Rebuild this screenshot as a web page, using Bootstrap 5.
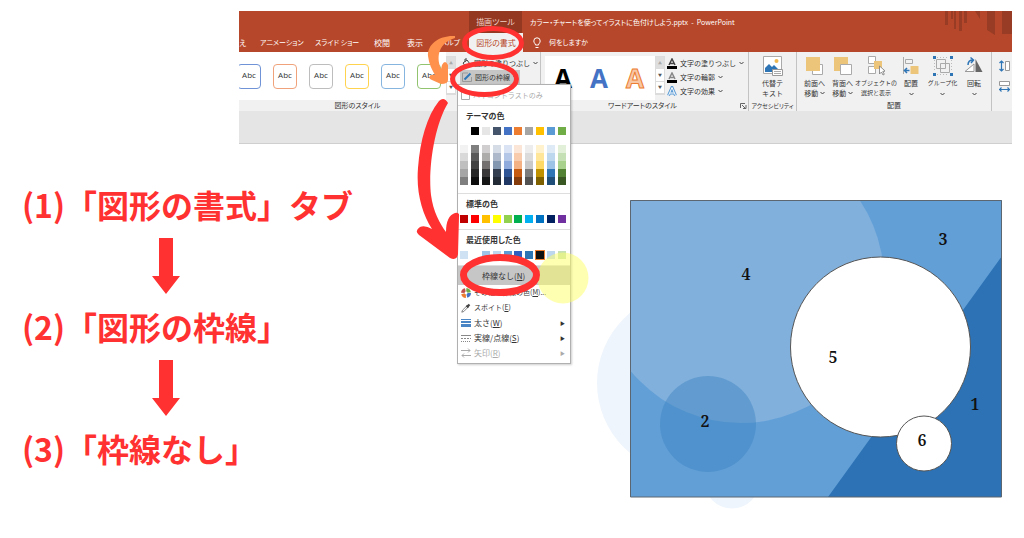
<!DOCTYPE html>
<html lang="ja">
<head>
<meta charset="utf-8">
<meta name="viewport" content="width=device-width, initial-scale=1">
<title>図形の枠線を消す手順</title>
<link href="https://cdn.jsdelivr.net/npm/bootstrap@5.3.0/dist/css/bootstrap.min.css" rel="stylesheet">
<style>
body{font-family:"Noto Sans CJK JP",sans-serif;font-feature-settings:"palt";font-size:8px;line-height:12px;color:#333;background:#fff}
svg{display:block;flex:none}
.ppt{margin:11px 12px 0 239px;font-size:8px}
.clip-x{overflow:hidden}
.titlebar{background:#b7472a;color:#fff;height:41px}
.titlebar a{color:#fff;text-decoration:none;white-space:nowrap;line-height:19px}
.kana{font-size:7px}
.tight{font-size:6px}
.title-row{height:22px}
.tab-row{height:19px;display:grid;grid-template-columns:21px 55px 59px 33px 33px 29px 54px 1fr}
.tool-tab{margin-left:230px;width:53px;background:#943822;color:#f0cfc6}
.tab-row .on{background:#f1f1f1;color:#b7472a}
.tell{padding-left:10px}
.circuit{top:0;right:0}
.ribbon{background:#f1f1f1;height:59px}
.grp{border-right:1px solid #c3c3c3}
.grp-main{height:48px}
.cap{height:11px;line-height:11px;text-align:center;white-space:nowrap;font-size:7px}
.cap.tight{font-size:6px}
.cap-shape{padding-right:64px}
.workspace{background:#e5e5e5;height:33px;border-bottom:1px solid #cfcfcf}
.gallery{background:#fff;flex:none}
.abc{width:24px;height:25px;border:1px solid;border-radius:4px;background:#fff;padding:0 0 4px;font:8px "Open Sans",sans-serif;color:#333}
.scroller{width:10px;height:39px;flex:none;border:1px solid #dcdcdc;background:#fff}
.scroller button{flex:1;border:0;border-bottom:1px solid #dcdcdc;background:#fff;padding:0;font-size:4px;line-height:8px;color:#555}
.scroller button:first-child{background:#dedede;color:#aaa}
.tool{border:0;background:none;padding:0 2px;height:14px;display:flex;align-items:center;gap:3px;white-space:nowrap;line-height:14px;color:#333}
.tool.pressed{background:#c6c6c6}
.big{border:0;background:none;padding:4px 0 0;display:flex;flex-direction:column;align-items:center;line-height:10px;white-space:nowrap;color:#333}
.big svg{margin-bottom:2px}
.chev{width:5px;height:4px;display:inline-block;vertical-align:middle;fill:none;stroke:#444}
.wa{border:0;background:none;padding:0;width:36px;font:bold 26px/36px "Open Sans",sans-serif}
.wa-line{color:#f7c6a5;-webkit-text-stroke:1px #ed7d31}
.outline-menu{display:block;top:73px;left:218px;width:114px;min-width:0;padding:0 0 3px;border:1px solid #b0b0b0;border-radius:0;box-shadow:1px 1px 2px #0003;font-size:8px;background:#fff;line-height:15px;color:#333}
.outline-menu h6{font-size:8px;line-height:12px;margin:0;padding:4px 0 5px 8px;font-weight:700}
.outline-menu section{border-bottom:1px solid #dedede}
.swatches{display:grid;grid-template-columns:repeat(10,1fr);padding:0 1px 6px 2px}
.swatches button{width:8px;height:8px;border:0;padding:0;background:var(--c)}
.mi{border:0;background:none;display:flex;align-items:center;gap:3px;padding:0 5px 0 3px;width:100%;height:15px;line-height:15px;color:#333;text-align:left}
.mi.hot{background:#c6c6c6;height:19px;padding-left:24px}
.mi .arr{margin-left:auto;font-size:5px}
.notes{left:0;top:0;pointer-events:none;z-index:1100}
.steps{margin:36px 0 0 22px;font-size:32px;line-height:48px;font-weight:700;color:#ff3131;font-feature-settings:normal}
.steps ol{list-style:none;margin:0;padding:0}
.steps svg{margin:10px 0 8px 130px}
.slide{margin:56px 22px 0 0;width:405px}
.slide text{font:600 16px "Noto Serif","Liberation Serif",serif;fill:#111;text-anchor:middle}
</style>
</head>
<body>
<header class="ppt position-relative">
  <div class="titlebar position-relative clip-x">
    <div class="title-row d-flex">
      <span class="tool-tab d-flex align-items-center justify-content-center flex-shrink-0">描画ツール</span>
      <span class="ps-2 d-flex align-items-center text-nowrap kana">カラー・チャートを使ってイラストに色付けしよう.pptx &nbsp;- &nbsp;PowerPoint</span>
    </div>
    <nav class="tab-row">
      <a href="#">え</a><a href="#" class="kana">アニメーション</a><a href="#" class="kana">スライド ショー</a><a href="#">校閲</a><a href="#">表示</a><a href="#" class="kana">ヘルプ</a>
      <a href="#" class="on text-center">図形の書式</a>
      <a href="#" class="d-flex align-items-center gap-2 tell kana"><svg width="8" height="12" viewBox="0 0 8 12" fill="none" stroke="#fff"><path d="M2.5 8C2.5 6.500.8 6 .8 4A3.200 3.200 0 0 1 7.200 4C7.200 6 5.500 6.500 5.500 8ZM2.500 10.500h3"/></svg>何をしますか</a>
    </nav>
    <svg class="circuit position-absolute" width="68" height="28" fill="#983c25"><path d="M1 0h3v14H1zM7 0h2v8H7zM10 0h2v18h-2zM15 0h3v20h-3zM20 0h3v12h-3zM31 0h5v8zM43 0h8v24l-8-5zM58 0h10v23H58z"/></svg>
  </div>

  <div class="ribbon d-flex clip-x">
    <div class="grp d-flex flex-column flex-shrink-0" style="width:302px">
      <div class="grp-main d-flex">
        <div class="gallery d-flex align-items-center clip-x" style="width:207px">
          <div class="d-flex" style="gap:12px;margin-left:-2px">
            <button class="abc" style="border-color:#6f93d6">Abc</button><button class="abc" style="border-color:#f0a27a">Abc</button><button class="abc" style="border-color:#bdbdbd">Abc</button><button class="abc" style="border-color:#ffd34d">Abc</button><button class="abc" style="border-color:#86b5e0">Abc</button><button class="abc" style="border-color:#92c36f">Abc</button>
          </div>
        </div>
        <div class="scroller d-flex flex-column mt-1"><button>▲</button><button>▼</button><button>▼</button></div>
        <div class="pt-1 ps-1">
          <button class="tool kana"><svg width="9" height="10" viewBox="0 0 9 10" fill="none" stroke="#444"><path d="M1 5l4-3 3 4-4 3zM3 4V1h2"/><path d="M8 6v3" stroke="#2e75b6" stroke-width="2"/></svg>図形の塗りつぶし<svg class="chev"><path d="M.5 1l2 2 2-2"/></svg></button>
          <button class="tool pressed kana"><svg width="10" height="10" viewBox="0 0 10 10" fill="none" stroke="#999"><path d="M6 1H.500v8.500h9V5"/><path d="M2.500 7.500l6-6" stroke="#2e75b6" stroke-width="2"/></svg>図形の枠線<svg class="chev"><path d="M.5 1l2 2 2-2"/></svg></button>
        </div>
      </div>
      <div class="cap cap-shape">図形のスタイル</div>
    </div>

    <div class="grp ps-1 d-flex flex-column flex-shrink-0" style="width:208px">
      <div class="grp-main d-flex pt-1">
        <div class="gallery d-flex clip-x" style="width:110px"><button class="wa text-black">A</button><button class="wa" style="color:#4472c4">A</button><button class="wa wa-line">A</button></div>
        <div class="scroller d-flex flex-column"><button>▲</button><button>▼</button><button>▼</button></div>
        <div>
          <button class="tool kana"><svg width="10" height="11" viewBox="0 0 10 11"><path d="M2 7l3-6 3 6M3 5.500h4" fill="none" stroke="#444" stroke-width="1.500"/><path d="M0 8h10v3H0z"/></svg>文字の塗りつぶし<svg class="chev"><path d="M.5 1l2 2 2-2"/></svg></button>
          <button class="tool kana"><svg width="10" height="11" viewBox="0 0 10 11"><path d="M2 7l3-6 3 6M3 5.500h4" fill="none" stroke="#888" stroke-width="1.500"/><path d="M0 8h10v3H0z"/></svg>文字の輪郭<svg class="chev"><path d="M.5 1l2 2 2-2"/></svg></button>
          <button class="tool kana"><svg width="10" height="11" viewBox="0 0 10 11" fill="none"><path d="M1.500 9.500L5 1.500l3.500 8M3 7h4" stroke="#5b9bd5" stroke-width="3"/><path d="M1.500 9.500L5 1.500l3.500 8M3 7h4" stroke="#fff"/></svg>文字の効果<svg class="chev"><path d="M.5 1l2 2 2-2"/></svg></button>
        </div>
      </div>
      <div class="cap d-flex align-items-center"><span class="flex-grow-1">ワードアートのスタイル</span><svg width="8" height="6" fill="none" stroke="#666"><path d="M.5 5V.5H5M2 2l3 3M6 2v3.500H3"/></svg></div>
    </div>

    <div class="grp d-flex flex-column flex-shrink-0" style="width:48px">
      <div class="grp-main d-flex justify-content-center"><button class="big kana"><svg width="20" height="20" viewBox="0 0 20 20"><path d="M.5 .5h18v17H.5z" fill="#fff" stroke="#aaa"/><circle cx="13.500" cy="5" r="2" fill="#f0b850"/><path d="M2 16v-4l4-4 3 3 2-2 4 4v3z" fill="#2e75b6"/><path d="M9.500 13.500h10v6h-10z" fill="#fff" stroke="#999"/><path d="M11 15.500h7M11 17.500h7" stroke="#aaa"/></svg>代替テ<br>キスト</button></div>
      <div class="cap tight">アクセシビリティ</div>
    </div>

    <div class="grp d-flex flex-column flex-shrink-0" style="width:195px">
      <div class="grp-main d-grid kana" style="grid-template-columns:29px 27px 40px 30px 33px 30px;padding-left:3px">
        <button class="big"><svg width="18" height="20" viewBox="0 0 18 20"><path d="M6.500 8.500h10v10h-10z" fill="#fff" stroke="#aaa"/><path d="M0 1h14v14H0z" fill="#ecc57b"/></svg><span>前面へ<br>移動 <svg class="chev"><path d="M.5 1l2 2 2-2"/></svg></span></button>
        <button class="big"><svg width="18" height="20" viewBox="0 0 18 20"><path d="M0 1h14v14H0z" fill="#ecc57b"/><path d="M6.500 8.500h11v10h-11z" fill="#fff" stroke="#aaa"/></svg><span>背面へ<br>移動 <svg class="chev"><path d="M.5 1l2 2 2-2"/></svg></span></button>
        <button class="big tight"><svg width="18" height="20" viewBox="0 0 18 20"><path d="M1.500 .5h7v7h-7zM1.500 10.500h7v7h-7z" fill="#fff" stroke="#aaa"/><path d="M7 5h8v8H7z" fill="#ecc57b"/><path d="M12.500 10v8l2-2 1.500 3 1.300-.700-1.500-3h2.700z" fill="#fff" stroke="#777" stroke-width=".8"/></svg>オブジェクトの<br>選択と表示</button>
        <button class="big"><svg width="18" height="20" viewBox="0 0 18 20"><path d="M1.500 1v17M3.500 3.500h7v4h-7z" fill="none" stroke="#aaa"/><path d="M8.500 10h8v8h-8z" fill="#ecc57b"/><path d="M7.500 14.500H3M5 12l-2.500 2.500L5 17" fill="none" stroke="#2e75b6" stroke-width="1.500"/></svg>配置<svg class="chev mt-1"><path d="M.5 1l2 2 2-2"/></svg></button>
        <button class="big tight"><svg width="20" height="20" viewBox="0 0 20 20"><path d="M3.500 3.500h9v9h-9zM7.500 7.500h9v9h-9z" fill="none" stroke="#aaa"/><path d="M1.500 4v12M18.500 4v12M4 1.500h12M4 18.500h12" fill="none" stroke="#bbb" stroke-dasharray="1 2"/><path d="M0 0h3v3H0zM17 0h3v3h-3zM0 17h3v3H0zM17 17h3v3h-3z" fill="#2e75b6"/></svg>グループ化<svg class="chev mt-1"><path d="M.5 1l2 2 2-2"/></svg></button>
        <button class="big"><svg width="20" height="20" viewBox="0 0 20 20"><path d="M1 15.500h9V8z" fill="#fff" stroke="#999"/><path d="M11.500 3v13h7z" fill="#666"/><path d="M4 9q0-5 5-5M6.500 1.500L9.500 4 7 7" fill="none" stroke="#2e75b6" stroke-width="1.500"/></svg>回転<svg class="chev mt-1"><path d="M.5 1l2 2 2-2"/></svg></button>
      </div>
      <div class="cap">配置</div>
    </div>
    <div class="pt-2 d-flex flex-column gap-2 flex-shrink-0" style="padding-left:7px">
      <svg width="11" height="12" viewBox="0 0 11 12" role="img" aria-label="高さ"><path d="M6.500 1.500h4v9h-4z" fill="#fff" stroke="#999"/><path d="M2.500 1v10M.5 3l2-2 2 2M.5 9l2 2 2-2" fill="none" stroke="#2e75b6" stroke-width="1.200"/></svg>
      <svg width="11" height="12" viewBox="0 0 11 12" role="img" aria-label="幅"><path d="M.5 1.500h10v4H.5z" fill="#fff" stroke="#999"/><path d="M0 9.500h11M2.500 7.500l-2 2 2 2M8.500 7.500l2 2-2 2" fill="none" stroke="#2e75b6" stroke-width="1.200"/></svg>
    </div>
  </div>
  <div class="workspace"></div>

  <div class="dropdown-menu outline-menu position-absolute" id="menu">
    <section><button class="mi kana" style="color:#aaa;height:20px"><svg width="9" height="9" fill="none" stroke="#aaa"><path d="M.5 .5h8v8h-8z"/></svg>ハイコントラストのみ</button></section>
    <section>
      <h6>テーマの色</h6>
      <div class="swatches" data-c="fff 000 e7e6e6 44546a 4472c4 ed7d31 a5a5a5 ffc000 5b9bd5 70ad47"></div>
      <div class="swatches pt-1 pb-2" data-c="f2f2f2 7f7f7f d0cece d6dce5 dae3f3 fbe5d6 ededed fff2cc deebf7 e2f0d9 d9d9d9 595959 aeabab adb9ca b4c7e7 f8cbad dbdbdb ffe699 bdd7ee c5e0b4 bfbfbf 404040 757070 8497b0 8faadc f4b183 c9c9c9 ffd966 9dc3e6 a9d18e a6a6a6 262626 3a3838 333f50 2f5597 c55a11 7b7b7b bf9000 2e75b6 548235 7f7f7f 0d0d0d 171616 222a35 203864 843c0c 525252 7f6000 1f4e79 385723"></div>
    </section>
    <section>
      <h6>標準の色</h6>
      <div class="swatches" data-c="c00000 f00 ffc000 ff0 92d050 00b050 00b0f0 0070c0 002060 7030a0"></div>
    </section>
    <section>
      <h6>最近使用した色</h6>
      <div class="swatches" data-c="cfe2f3 fff 9dc3e6 bdd7ee 5b9bd5 2f5fc0 2e75b6 111 bdd7ee c5e0b4"></div>
    </section>
    <button class="mi hot"><span>枠線なし(<u>N</u>)</span></button>
    <button class="mi kana"><svg width="10" height="10" viewBox="0 0 10 10" fill="none" stroke-width="3.500"><circle cx="5" cy="5" r="3.200" stroke="#4472c4" stroke-dasharray="4 16.100"/><circle cx="5" cy="5" r="3.200" stroke="#ed7d31" stroke-dasharray="4 16.100" stroke-dashoffset="-5"/><circle cx="5" cy="5" r="3.200" stroke="#c0504d" stroke-dasharray="4 16.100" stroke-dashoffset="-10"/><circle cx="5" cy="5" r="3.200" stroke="#70ad47" stroke-dasharray="4 16.100" stroke-dashoffset="-15"/></svg><span>その他の枠線の色(<u>M</u>)...</span></button>
    <button class="mi kana"><svg width="10" height="10" viewBox="0 0 10 10"><path d="M.8 9.200l.7-2L6 2.800 7.200 4 2.800 8.500z" fill="#fff" stroke="#666" stroke-width=".8"/><path d="M5.500 2.500l2 2M6.500 3.500l2-2" stroke="#444" stroke-width="2.200"/></svg><span>スポイト(<u>E</u>)</span></button>
    <button class="mi"><svg width="10" height="10"><path d="M0 1h10v1H0zM0 3h10v2H0zM0 6h10v3H0z" fill="#4a86c5"/></svg><span>太さ(<u>W</u>)</span><span class="arr">▶</span></button>
    <button class="mi"><svg width="10" height="10" stroke="#888"><path d="M0 2.500h10"/><path d="M0 5.500h10" stroke-dasharray="2 1"/><path d="M0 8.500h10" stroke-dasharray="1 1"/></svg><span>実線/点線(<u>S</u>)</span><span class="arr">▶</span></button>
    <button class="mi" style="color:#aaa"><svg width="10" height="10" fill="none" stroke="#aaa"><path d="M0 2.500h9M7 .5l2 2-2 2M1 7.500h9M3 5.500l-2 2 2 2"/></svg><span>矢印(<u>R</u>)</span><span class="arr">▶</span></button>
  </div>

  <!-- hand-drawn marks over the ribbon and the menu -->
  <svg class="notes position-absolute" width="360" height="300" viewBox="239 11 360 300" fill="none" stroke="#ff3131" stroke-linecap="round" stroke-linejoin="round">
    <circle cx="563" cy="278" r="25.500" fill="#ffff66" fill-opacity=".5" stroke="none"/>
    <path d="M455 36C440 35 427 44 428 56C429 64 432 70 435 75L431 75Q427 78 432 80L441 84Q448 84 448 80L448 65Q445 59 442 65L441 69C437 60 436 44 455 38Z" fill="#ff914d" stroke="none"/>
    <ellipse cx="493" cy="43" rx="28.500" ry="14.500" stroke-width="5"/>
    <ellipse cx="484.500" cy="79" rx="32" ry="15.500" stroke-width="5"/>
    <ellipse cx="500" cy="275" rx="36.500" ry="17.500" stroke-width="7"/>
    <path d="M439 101Q444 96 448 103C434 126 428 170 431 195C433 211 440 224 446 232Q446 216 455 213Q460 212 459 217L458 254Q457 261 450 258L419 235Q414 231 420 227Q425 225 432 229C422 213 416 192 418 168C420 140 427 116 439 101Z" fill="#ff3131" stroke="none"/>
  </svg>
</header>

<main class="d-flex justify-content-between align-items-start">
  <div class="steps text-nowrap">
    <ol>
      <li>(1)「図形の書式」タブ<svg width="28" height="56" fill="currentColor"><path d="M7 0h14v38h7L14 56 0 38h7z"/></svg></li>
      <li>(2)「図形の枠線」<svg width="28" height="56" fill="currentColor"><path d="M7 0h14v38h7L14 56 0 38h7z"/></svg></li>
      <li>(3)「枠線なし」</li>
    </ol>
  </div>
  <svg class="slide" viewBox="597 200 405 309" role="img" aria-label="番号付きの図形">
    <defs><clipPath id="frame"><path d="M630 200h372v297H630z"/></clipPath></defs>
    <g fill="#eff5fc"><circle cx="688" cy="383" r="91"/><circle cx="732" cy="481" r="27.500"/></g>
    <g clip-path="url(#frame)">
      <path d="M630 200h372v297H630z" fill="#629fd7"/>
      <circle cx="741" cy="280" r="143" fill="#81b0dc"/>
      <path d="M1002 256v241H828z" fill="#2c72b4"/>
      <circle cx="708" cy="424" r="48" fill="#3c82c2" fill-opacity=".45"/>
    </g>
    <path d="M630.500 200.500h371v296.500h-371z" fill="none" stroke="#5c6670"/>
    <g fill="#fff" stroke="#555"><circle cx="880.500" cy="347" r="90"/><circle cx="924" cy="443.500" r="27.500"/></g>
    <text x="975" y="410">1</text><text x="705" y="427">2</text><text x="943" y="245">3</text><text x="746" y="280">4</text><text x="833" y="363">5</text><text x="922" y="446">6</text>
  </svg>
</main>
<script src="https://cdn.jsdelivr.net/npm/bootstrap@5.3.0/dist/js/bootstrap.bundle.min.js"></script>
<script>
document.querySelectorAll('.swatches').forEach(g => g.dataset.c.split(' ').forEach(c => {
  const b = document.createElement('button');
  b.style.setProperty('--c', '#' + c);
  if (c === '111') b.style.outline = '1px solid #ed7d31';
  b.setAttribute('aria-label', '#' + c);
  g.append(b);
}));
</script>
</body>
</html>
